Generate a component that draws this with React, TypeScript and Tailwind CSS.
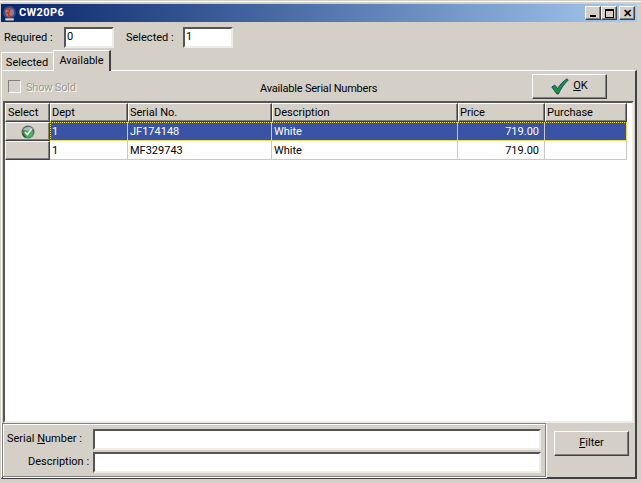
const raised = "border border-t-white border-l-white border-r-[#404040] border-b-[#404040] bg-[#d4d0c8] shadow-[inset_-1px_-1px_0_#808080]"
const sunken = "border-2 border-t-[#555] border-l-[#555] border-r-[#eeece6] border-b-[#eeece6] bg-white"

const columns = [
    { label: "Dept", width: "w-[78px]" },
    { label: "Serial No.", width: "w-[144px]" },
    { label: "Description", width: "w-[186px]" },
    { label: "Price", width: "w-[87px]" },
    { label: "Purchase", width: "w-[82px]" },
]

const rows = [
    { dept: "1", serial: "JF174148", description: "White", price: "719.00", active: true },
    { dept: "1", serial: "MF329743", description: "White", price: "719.00", active: false },
]

const AppIcon = () => (
    <svg width="15" height="15" viewBox="0 0 14 14">
        <circle cx="7" cy="6" r="6" fill="#2c4f8c" />
        <circle cx="7" cy="6" r="4.200" fill="#a9787c" />
        <path d="M4 3h5M7 3l-1 6M3 7l4-1M6 9l3 1" stroke="#c03018" strokeWidth="1.200" fill="none" />
        <rect x="3" y="11.500" width="8" height="2" fill="#d8d4c0" />
    </svg>
)

const CheckIcon = () => (
    <svg width="18" height="17" viewBox="0 0 18 17">
        <path d="M0.800 9l3-2 2.700 3.500C9 6.500 12 3.500 16 0.800L17.300 2C13 6 10 10.500 7.500 16H5.800Z" fill="#1c8f3c" stroke="#14376e" strokeWidth="0.800" />
    </svg>
)

const RowIcon = () => (
    <svg width="14" height="14" viewBox="0 0 14 14">
        <circle cx="7" cy="7" r="6.500" fill="#5e6a64" />
        <circle cx="7.500" cy="8" r="4.500" fill="#45b35a" />
        <path d="M2 5C4 1.500 9 1 12 4L7 5.500Z" fill="#aebcc0" />
        <path d="M4 7l2.500 2.500L10.500 4" stroke="#f0f6f0" strokeWidth="1.500" fill="none" />
        <path d="M1.500 9l3 3.500" stroke="#3c4a50" strokeWidth="1.500" />
    </svg>
)

const CaptionButton = ({ children }: { children: React.ReactNode }) => (
    <div className={`${raised} w-4 h-[14px] flex items-center justify-center`}>{children}</div>
)

export default function App() {
    return (
        <div
            className="w-[641px] h-[483px] overflow-hidden bg-[#d4d0c8] text-[11px] text-black border-t-[1px] border-t-[#d4d0c8] flex flex-col"
            style={{ fontFamily: 'Roboto, "Liberation Sans", Arial, sans-serif' }}
        >
            <div className="h-px bg-white shrink-0" />
            <div className="h-[2px] shrink-0" />
            <div className="mx-[1px] mr-[4px] h-[18px] shrink-0 flex items-center bg-gradient-to-r from-[#0a246a] to-[#a6caf0] pl-[1px] pr-[2px]">
                <AppIcon />
                <span className="ml-[2px] text-white font-bold text-[11px] tracking-[0.4px]">CW20P6</span>
                <div className="ml-auto flex">
                    <CaptionButton>
                        <div className="w-[6px] h-[2px] bg-black mt-[6px]" />
                    </CaptionButton>
                    <CaptionButton>
                        <div className="w-[9px] h-[9px] border border-black border-t-2" />
                    </CaptionButton>
                    <div className="w-[2px]" />
                    <CaptionButton>
                        <span className="font-bold text-[11px] leading-none">✕</span>
                    </CaptionButton>
                </div>
            </div>

            <div className="h-[22px] mt-[4px] shrink-0 flex items-center pl-[4px]">
                <span className="w-[60px] pt-[2px]">Required :</span>
                <div className={`${sunken} w-[50px] h-[21px] flex items-center pl-[1px]`}>0</div>
                <span className="ml-[12px] w-[57px] pt-[2px]">Selected :</span>
                <div className={`${sunken} w-[50px] h-[21px] flex items-center pl-[1px]`}>1</div>
            </div>

            <div className="h-[20px] mt-[2px] shrink-0 flex items-end pl-[1px] relative z-10">
                <div className="w-[52px] h-[18px] border-t border-l border-white flex items-center justify-center border-r border-r-[#d4d0c8] pt-[3px]">
                    Selected
                </div>
                <div className="w-[58px] h-[21px] -mb-px bg-[#d4d0c8] border-t border-l border-white border-r-2 border-r-[#404040] flex items-center justify-center">
                    Available
                </div>
            </div>

            <div className="flex-1 min-h-0 ml-[1px] mr-[4px] mb-[4px] border-t border-l border-white border-r-2 border-b-2 border-r-[#404040] border-b-[#404040] flex flex-col">
                <div className="h-[30px] shrink-0 flex items-start">
                    <div className="ml-[6px] mt-[9px] w-[13px] h-[13px] border border-t-[#808080] border-l-[#808080] border-r-white border-b-white" />
                    <span className="ml-[5px] w-[48px] mt-[9px] whitespace-nowrap tracking-[-0.2px] text-[#9a9890] [text-shadow:1px_1px_0_#fff]">Show Sold</span>
                    <span className="ml-[186px] w-[118px] mt-[10px] whitespace-nowrap tracking-[-0.2px]">Available Serial Numbers</span>
                    <button className={`${raised} ml-[154px] mt-[3px] w-[75px] h-[25px] flex items-center justify-center gap-[4px]`}>
                        <CheckIcon />
                        <span>
                            <span className="underline">O</span>K
                        </span>
                    </button>
                </div>

                <div className="flex-1 min-h-0 ml-[1px] mr-[1px] border-2 border-t-[#555] border-l-[#555] border-r-[#eeece6] border-b-[#eeece6] bg-white overflow-hidden">
                    <div className="flex h-[19px]">
                        <div className={`${raised} w-[45px] flex items-center pl-[2px] pt-[1px]`}>Select</div>
                        {columns.map((c) => (
                            <div key={c.label} className={`${raised} ${c.width} flex items-center pl-[1px] pt-[1px]`}>
                                {c.label}
                            </div>
                        ))}
                    </div>
                    {rows.map((r) => {
                        const cell = `h-full flex items-center px-[2px] pt-[2px] border-r border-b border-[#c8c8c8] ${
                            r.active ? "bg-[#3a53a4] text-white" : "bg-white"
                        }`
                        return (
                            <div key={r.serial} className="flex h-[19px]">
                                <div className={`${raised} w-[45px] flex items-center justify-center`}>
                                    {r.active && <RowIcon />}
                                </div>
                                <div className={`flex h-full ${r.active ? "outline-1 outline-dotted outline-[#f0e060] -outline-offset-1" : ""}`}>
                                    <div className={`${cell} w-[78px]`}>{r.dept}</div>
                                    <div className={`${cell} w-[144px]`}>{r.serial}</div>
                                    <div className={`${cell} w-[186px]`}>{r.description}</div>
                                    <div className={`${cell} w-[87px] justify-end pr-[5px]`}>{r.price}</div>
                                    <div className={`${cell} w-[82px]`} />
                                </div>
                            </div>
                        )
                    })}
                </div>

                <div className="h-[54px] shrink-0 flex">
                    <div className="w-[544px] border border-[#808080] shadow-[inset_1px_1px_0_#fff,1px_1px_0_#fff] flex flex-col gap-[2px] pt-[5px] pl-[2px]">
                        <div className="flex items-center h-[21px]">
                            <span className="w-[88px] pl-[2px]">
                                Serial <span className="underline">N</span>umber :
                            </span>
                            <div className={`${sunken} w-[448px] h-full`} />
                        </div>
                        <div className="flex items-center h-[21px]">
                            <span className="w-[88px] pl-[23px]">Description :</span>
                            <div className={`${sunken} w-[448px] h-full`} />
                        </div>
                    </div>
                    <button className={`${raised} ml-[8px] mt-[8px] w-[75px] h-[25px] flex items-center justify-center`}>
                        <span>
                            <span className="underline">F</span>ilter
                        </span>
                    </button>
                </div>
            </div>
        </div>
    )
}
